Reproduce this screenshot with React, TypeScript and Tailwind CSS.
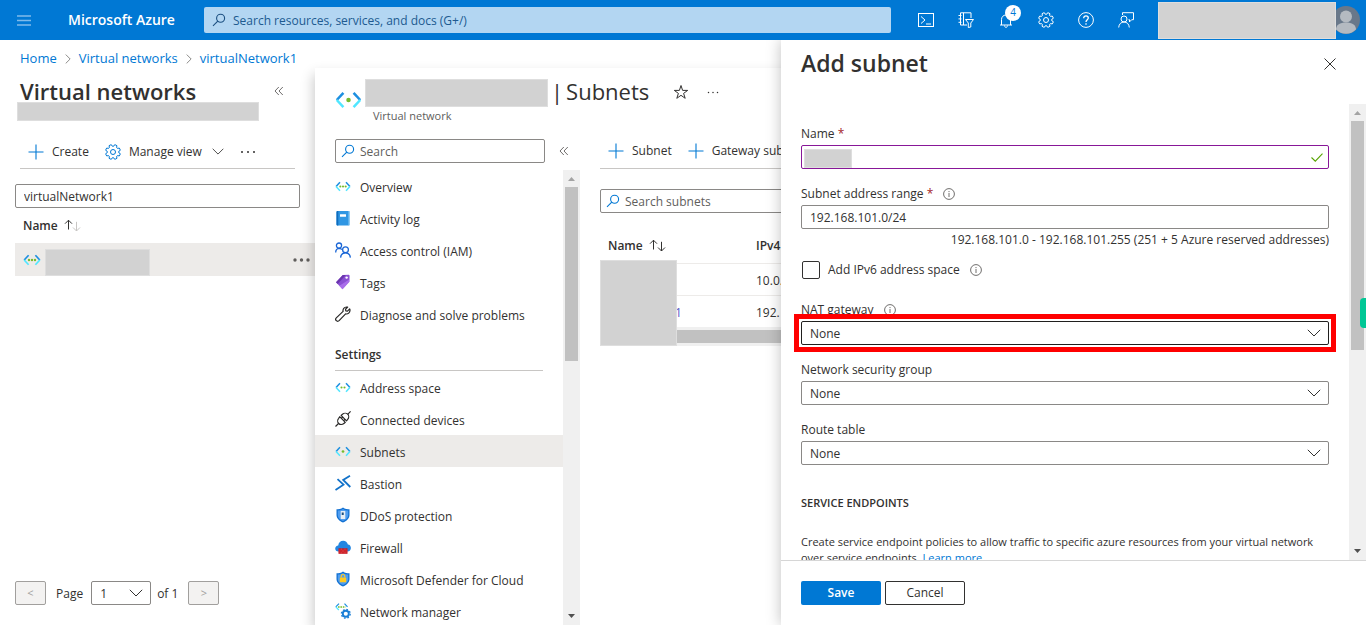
import type { ReactNode } from 'react'

type IconProps = { className?: string }

// eight rounded teeth around a 16x16 box
const GEAR_PATH = (() => {
  const pt = (r: number, deg: number) => {
    const a = (deg * Math.PI) / 180
    return `${(8 + r * Math.cos(a)).toFixed(2)} ${(8 + r * Math.sin(a)).toFixed(2)}`
  }
  let d = ''
  for (let i = 0; i < 8; i++) {
    const c = i * 45 + 22.5
    d += `${i === 0 ? 'M' : 'L'}${pt(5.9, c - 15)}L${pt(7.4, c - 10)}Q${pt(7.8, c)} ${pt(7.4, c + 10)}L${pt(5.9, c + 15)}Q${pt(5.4, c + 22.5)} ${pt(5.9, c + 30)}`
  }
  return d + 'Z'
})()

function Gear({ className }: IconProps) {
  return (
    <svg viewBox="0 0 16 16" className={className} fill="none" stroke="currentColor">
      <path d={GEAR_PATH} />
      <circle cx="8" cy="8" r="2.5" />
    </svg>
  )
}

function Magnifier({ className }: IconProps) {
  return (
    <svg viewBox="0 0 14 14" className={className} fill="none" stroke="currentColor" strokeWidth="1.1">
      <circle cx="8.6" cy="5.2" r="4" />
      <path d="M5.8 8.1L1 12.9" />
    </svg>
  )
}

function Plus() {
  return (
    <svg viewBox="0 0 16 16" className="size-4 text-[#0078d4]" fill="none" stroke="currentColor" strokeWidth="1.1">
      <path d="M8 0.5v15M0.5 8h15" />
    </svg>
  )
}

function Chevron({ className }: IconProps) {
  return (
    <svg viewBox="0 0 14 8" className={className} fill="none" stroke="currentColor">
      <path d="M0.8 0.8L7 7l6.2-6.2" />
    </svg>
  )
}

function Collapse({ className }: IconProps) {
  return (
    <svg viewBox="0 0 10 10" className={className} fill="none" stroke="#605e5c" strokeWidth="0.9">
      <path d="M4.8 1L1 5l3.8 4M8.800 1L5 5l3.800 4" />
    </svg>
  )
}

function Dots({ className }: IconProps) {
  return (
    <svg viewBox="0 0 16 4" className={className} fill="currentColor">
      <circle cx="2" cy="2" r="1" />
      <circle cx="8" cy="2" r="1" />
      <circle cx="14" cy="2" r="1" />
    </svg>
  )
}

function Info() {
  return (
    <svg viewBox="0 0 12 12" className="size-3" fill="none" stroke="#605e5c" strokeWidth="0.9">
      <circle cx="6" cy="6" r="5.4" />
      <path d="M6 5v4M6 3v1.1" />
    </svg>
  )
}

function SortArrows({ faded }: { faded?: boolean }) {
  return (
    <svg viewBox="0 0 17 13" className="h-[13px] w-[17px]" fill="none" stroke="#323130">
      <path d="M4.500 10.500V1.200M1 4.700l3.500-3.500L8 4.700" />
      <path d="M12.500 2.800V12M9 8.500l3.500 3.500L16 8.500" stroke={faded ? '#c8c6c4' : '#323130'} />
    </svg>
  )
}

function VNet({ dots, className }: { dots: number; className?: string }) {
  const xs = dots === 1 ? [9] : dots === 2 ? [7.3, 10.7] : [6, 9, 12]
  return (
    <svg viewBox="0 0 18 12" className={className} fill="none" strokeWidth="1.7">
      <path d="M5.600 1.200L1.200 6" stroke="#1c8fe0" />
      <path d="M1.200 6l4.400 4.800" stroke="#50e6ff" />
      <path d="M12.400 1.200L16.800 6" stroke="#1c8fe0" />
      <path d="M16.800 6l-4.400 4.800" stroke="#50e6ff" />
      {xs.map((x) => (
        <circle key={x} cx={x} cy="6" r={dots === 1 ? 1.5 : 1.2} fill="#76bc2d" />
      ))}
    </svg>
  )
}

function Svg16({ children }: { children: ReactNode }) {
  return (
    <svg viewBox="0 0 16 16" className="size-4" fill="none">
      {children}
    </svg>
  )
}

const SHIELD = 'M8 0.5C10 2 12.3 2.3 14.5 2.3V8c0 3.6-3 6-6.5 7.5C4.5 14 1.5 11.6 1.5 8V2.3C3.7 2.3 6 2 8 0.5Z'
const SHIELD_INNER = 'M8 2c1.6 1.1 3.4 1.5 5.2 1.5V8c0 2.9-2.4 4.9-5.2 6.1C5.2 12.9 2.8 10.9 2.8 8V3.5C4.6 3.5 6.4 3.1 8 2z'

const ICONS = {
  overview: <VNet dots={3} className="h-[11px] w-4" />,
  space: <VNet dots={2} className="h-[11px] w-4" />,
  subnets: <VNet dots={1} className="h-[11px] w-4" />,
  log: (
    <Svg16>
      <rect x="1.5" y="1" width="13" height="14.5" rx="1" fill="#2f96e3" />
      <path d="M1.5 2a1 1 0 011-1H3.300v14.500h-.8a1 1 0 01-1-1z" fill="#0f6cbd" />
      <path d="M13.500 1h.5a.8.8 0 01.8.8v12.900a.8.8 0 01-.8.8h-.5z" fill="#8ccbf5" />
      <rect x="5" y="4.300" width="6" height="2.400" rx=".3" fill="#fff" />
    </Svg16>
  ),
  iam: (
    <Svg16>
      <g stroke="#1a66d6" strokeWidth="1.3">
        <circle cx="4" cy="3.6" r="2.6" />
        <circle cx="10.500" cy="7.800" r="2.900" />
        <path d="M0.700 10.500C.7 8 2 6.500 4 6.300c1.200 0 2 .4 2.900 1.100M5.600 15.600c.2-3 2-4.800 4.900-4.800s4.600 1.800 4.900 4.800" />
      </g>
    </Svg16>
  ),
  tags: (
    <Svg16>
      <path d="M7.800 1l6-.2.8.8-.2 6.200-6.900 7.400-6.500-6.900z" fill="#8a4fd3" />
      <path d="M7.800 1l3-.1L2.700 9.900 1 8.300z" fill="#6a35ad" />
      <path d="M7.500 15.200L4.300 11.800l10-6.300v2.300z" fill="#b77af4" opacity=".7" />
      <circle cx="11.600" cy="3.600" r="1.200" fill="#fff" />
    </Svg16>
  ),
  wrench: (
    <Svg16>
      <path
        d="M11.600 1c-2.400.1-4 2-3.500 4.400L1.300 11.900a1.900 1.900 0 002.800 2.800l6.500-6.800c2.400.5 4.600-1.200 4.400-4l-.3-1-2.200 2.300-1.700-.3-.3-1.700 2.200-2.100z"
        stroke="#292827"
        strokeWidth="1.2"
        strokeLinejoin="round"
      />
    </Svg16>
  ),
  plug: (
    <Svg16>
      <g stroke="#292827" strokeWidth="1.2" strokeLinejoin="round">
        <path d="M0.500 15.500l3-3M12.700 3.300l2.900-2.900" />
        <path d="M4.700 5.700l5.600 5.600-1.400 1.200c-1.500 1.300-4 1.300-5.200 0-1.300-1.300-1.300-3.800 0-5.200z" />
        <path d="M6.100 4.400l1.400-1.200c1.500-1.300 3.900-1.300 5.200 0s1.300 3.700 0 5.200L11.500 9.800z" />
        <path d="M6.300 7.300l1.600-1.300M8.700 9.700l1.500-1.500" />
      </g>
    </Svg16>
  ),
  bastion: (
    <Svg16>
      <g stroke="#1272c9" strokeWidth="1.8">
        <path d="M0.500 15l8-5.300-6-5.500" />
        <path d="M15 .8L8.200 5l7.100 7" />
      </g>
    </Svg16>
  ),
  ddos: (
    <Svg16>
      <path d={SHIELD} fill="#1372d3" />
      <path d={SHIELD_INNER} fill="#4f9df0" />
      <rect x="5.700" y="4" width="4.600" height="8" rx=".5" fill="#e8eef5" />
      <rect x="6.700" y="5.500" width="2" height="2.500" fill="#1b4f80" />
    </Svg16>
  ),
  firewall: (
    <Svg16>
      <path d="M3.500 12.500C1.500 12.500.2 11.200.2 9.500c0-1.800 1.300-2.900 3-3.100C3.500 3.600 5.600 1.700 8.200 1.700c2.300 0 4.100 1.500 4.700 3.700 1.800.1 3 1.600 3 3.500s-1.300 3.600-3.300 3.600z" fill="#2386e2" />
      <rect x="3.500" y="9.300" width="9" height="5.500" fill="#c5161f" />
      <path d="M3.500 11h9M3.500 13h9M6.300 9.300V11M10 9.300V11M8 11v2M6.300 13v1.800M10 13v1.800" stroke="#e8545b" strokeWidth=".5" />
    </Svg16>
  ),
  defender: (
    <Svg16>
      <path d={SHIELD} fill="#1372d3" />
      <path d={SHIELD_INNER} fill="#4f9df0" />
      <rect x="4.800" y="6.500" width="6.400" height="4.800" rx=".5" fill="#ffca1f" />
      <path d="M6.200 6.600V5.300a1.800 1.800 0 013.600 0v1.300" stroke="#ffca1f" strokeWidth="1.2" />
    </Svg16>
  ),
  manager: (
    <Svg16>
      <path d="M4 .6L.8 3.900M9.500.6l3 3.300" stroke="#1c8fe0" strokeWidth="1.2" />
      <path d="M.8 3.900l3 3.100" stroke="#50e6ff" strokeWidth="1.2" />
      <path d="M3 3.900h7.500" stroke="#76bc2d" strokeWidth="1.5" strokeDasharray="1.6 .8" />
      <circle cx="10.800" cy="10.800" r="3" stroke="#1b7fd6" strokeWidth="1.9" />
      <circle cx="10.800" cy="10.800" r="4.400" stroke="#1b7fd6" strokeWidth="1.3" strokeDasharray="1.7 1.75" />
    </Svg16>
  ),
}

const MENU: { label: string; icon: keyof typeof ICONS }[] = [
  { label: 'Overview', icon: 'overview' },
  { label: 'Activity log', icon: 'log' },
  { label: 'Access control (IAM)', icon: 'iam' },
  { label: 'Tags', icon: 'tags' },
  { label: 'Diagnose and solve problems', icon: 'wrench' },
]

const SETTINGS: { label: string; icon: keyof typeof ICONS }[] = [
  { label: 'Address space', icon: 'space' },
  { label: 'Connected devices', icon: 'plug' },
  { label: 'Subnets', icon: 'subnets' },
  { label: 'Bastion', icon: 'bastion' },
  { label: 'DDoS protection', icon: 'ddos' },
  { label: 'Firewall', icon: 'firewall' },
  { label: 'Microsoft Defender for Cloud', icon: 'defender' },
  { label: 'Network manager', icon: 'manager' },
]

const HEADER_ICONS: { label: string; icon: ReactNode; badge?: string }[] = [
  {
    label: 'Cloud Shell',
    icon: (
      <>
        <rect x="0.5" y="1.5" width="15" height="13" />
        <path d="M3 4.500l4 3.500-4 3.500M8 12h5" />
      </>
    ),
  },
  {
    label: 'Directories',
    icon: (
      <>
        <path d="M13 6V.8H2.500V13H9M5.500.8V13M.5 3.500h3M.5 6.900h3M.5 10.300h3" />
        <path d="M7.500 7.500h8l-2.700 3.500v4l-2.500.5V11z" />
      </>
    ),
  },
  {
    label: 'Notifications',
    icon: <path d="M2 13h12M3.500 13V7.500C3.500 5 5.300 3 8 3s4.500 2 4.500 4.500V13M6.500 13.500c.2 1.300.8 1.900 1.500 1.900s1.300-.6 1.500-1.900" />,
    badge: '4',
  },
  {
    label: 'Settings',
    icon: (
      <>
        <path d={GEAR_PATH} />
        <circle cx="8" cy="8" r="2.5" />
      </>
    ),
  },
  {
    label: 'Help',
    icon: (
      <>
        <circle cx="8" cy="8" r="7.4" />
        <path d="M5.700 6.200C5.700 4.700 6.700 3.800 8 3.800s2.300.9 2.300 2.200c0 1.700-2.300 1.900-2.300 4M8 11.200v1.500" strokeWidth="1.3" />
      </>
    ),
  },
  {
    label: 'Feedback',
    icon: (
      <>
        <path d="M4.500 3V.7h11v7h-1.800L11.500 9.900V7.700h-1" />
        <circle cx="6" cy="7" r="3" />
        <path d="M.7 15.500C.9 12.200 3 10 6 10s5.100 2.200 5.300 5.500" />
      </>
    ),
  },
]

function Redacted({ className }: IconProps) {
  return <div className={`border border-[#dedede] bg-[#d2d2d2] ${className}`} />
}

function Scrollbar({ thumb }: { thumb: string }) {
  return (
    <div className="flex w-[17px] shrink-0 flex-col items-center bg-[#f0f0f0]">
      <svg viewBox="0 0 17 17" className="size-[17px] shrink-0">
        <path d="M5 11h7L8.500 7z" fill="#a3a3a3" />
      </svg>
      <div className={`w-[13px] bg-[#c1c1c1] ${thumb}`} />
      <svg viewBox="0 0 17 17" className="mt-auto size-[17px] shrink-0">
        <path d="M5 6h7l-3.500 4z" fill="#505050" />
      </svg>
    </div>
  )
}

function MenuItem({ label, icon }: { label: string; icon: keyof typeof ICONS }) {
  return (
    <a href="#" className={`flex h-8 shrink-0 items-center gap-[9px] pl-5 ${label === 'Subnets' ? 'bg-[#edebe9]' : ''}`}>
      <span className="flex w-4 justify-center">{ICONS[icon]}</span>
      <span className="pt-[3px]">{label}</span>
    </a>
  )
}

function SelectField({ id, label, info, highlight }: { id: string; label: string; info?: boolean; highlight?: boolean }) {
  return (
    <div>
      <div className="flex h-6 items-center gap-2.5 pt-0.5">
        <label htmlFor={id}>{label}</label>
        {info && <Info />}
      </div>
      <div className="relative">
        {highlight && <div className="absolute -inset-[7px] border-[5px] border-[#ff0000] bg-white" />}
        <select
          id={id}
          className={`relative block h-6 w-full appearance-none rounded-xs border bg-white px-2 pt-0.5 ${highlight ? 'border-[#201f1e]' : 'border-[#8a8886]'}`}
        >
          <option>None</option>
        </select>
        <Chevron className="pointer-events-none absolute top-2 right-2 h-2 w-3.5" />
      </div>
    </div>
  )
}

function Header() {
  return (
    <header className="flex h-10 shrink-0 items-center bg-[#0078d4]">
      <button aria-label="Menu" className="flex w-12 justify-center">
        <svg viewBox="0 0 14 11" className="h-[11px] w-3.5" stroke="#80bbea" strokeWidth="1.5">
          <path d="M0 1h14M0 5.500h14M0 10h14" />
        </svg>
      </button>
      <span className="w-[156px] pl-5 text-sm font-semibold text-white">Microsoft Azure</span>
      <label className="flex h-[26px] flex-1 items-center gap-[7px] rounded-xs bg-[#b3d6f2] px-2 text-[#1b4f80]">
        <Magnifier className="size-3.5" />
        <input
          type="search"
          aria-label="Search resources"
          placeholder="Search resources, services, and docs (G+/)"
          className="flex-1 bg-transparent pt-px outline-none placeholder:text-[#205a90]"
        />
      </label>
      <div className="ml-[15px] flex">
        {HEADER_ICONS.map((item) => (
          <button key={item.label} aria-label={item.label} className="relative flex size-10 items-center justify-center">
            <svg viewBox="0 0 16 16" className="size-4" fill="none" stroke="#fff">
              {item.icon}
            </svg>
            {item.badge && (
              <span className="absolute top-[5px] right-[5px] flex size-4 items-center justify-center rounded-full bg-white text-[10px] text-[#0078d4]">
                {item.badge}
              </span>
            )}
          </button>
        ))}
      </div>
      <Redacted className="relative z-10 ml-3 h-[37px] w-[178px]" />
      <svg viewBox="0 0 28 28" className="mr-1.5 -ml-1 size-7">
        <circle cx="14" cy="14" r="14" fill="#69788a" />
        <circle cx="14" cy="10.500" r="6" fill="#b4bac1" />
        <path d="M4 23.500C4 19 8 16.500 14 16.500s10 2.500 10 7a14 14 0 01-20 0z" fill="#b4bac1" />
      </svg>
    </header>
  )
}

function NetworksBlade() {
  return (
    <section className="flex w-[315px] shrink-0 flex-col">
      <div className="flex h-[34px] items-center justify-between pt-3 pr-[31px] pl-5">
        <h1 className="text-[22px] leading-[30px] font-semibold">Virtual networks</h1>
        <button aria-label="Collapse list">
          <Collapse className="size-2.5" />
        </button>
      </div>
      <Redacted className="relative ml-[17px] h-[19px] w-[242px]" />
      <div className="mt-3.5 mr-5 ml-5 flex h-[34px] items-center border-b border-[#c8c6c4] pl-2">
        <button className="flex items-center gap-2">
          <Plus />
          Create
        </button>
        <button className="ml-4 flex items-center gap-2">
          <Gear className="size-4 text-[#0078d4]" />
          Manage view
          <span className="pl-0.5">
            <Chevron className="h-[7px] w-3" />
          </span>
        </button>
        <button aria-label="More commands" className="ml-4">
          <Dots className="h-1 w-4" />
        </button>
      </div>
      <input
        aria-label="Filter by name"
        defaultValue="virtualNetwork1"
        className="mt-[15px] mr-[15px] ml-[15px] h-6 rounded-xs border border-[#8a8886] px-2 outline-none"
      />
      <table className="ml-[15px]">
        <thead>
          <tr className="h-[35px]">
            <th className="pl-2 text-left font-semibold">
              <span className="flex items-center gap-1.5">
                Name <SortArrows faded />
              </span>
            </th>
          </tr>
        </thead>
        <tbody>
          <tr className="h-[33px] bg-[#edebe9]">
            <td className="pl-2">
              <div className="flex items-center">
                <VNet dots={3} className="h-3 w-[18px]" />
                <Redacted className="mt-1.5 ml-1 h-[27px] w-[105px]" />
                <button aria-label="Row actions" className="mr-1 ml-auto">
                  <svg viewBox="0 0 18 4" className="h-1 w-[18px]" fill="#605e5c">
                    <circle cx="2" cy="2" r="1.7" />
                    <circle cx="8.500" cy="2" r="1.7" />
                    <circle cx="15" cy="2" r="1.7" />
                  </svg>
                </button>
              </div>
            </td>
          </tr>
        </tbody>
      </table>
      <div className="mt-auto mb-5 ml-[15px] flex items-center">
        <button className="h-6 w-[31px] rounded-xs border border-[#a19f9d] bg-[#f3f2f1] text-[11px] text-[#a19f9d]">&lt;</button>
        <label htmlFor="page" className="ml-2.5 pt-0.5">
          Page
        </label>
        <div className="relative ml-2">
          <select id="page" className="block h-6 w-[60px] appearance-none rounded-xs border border-[#8a8886] px-2 pt-0.5">
            <option>1</option>
          </select>
          <Chevron className="pointer-events-none absolute top-2 right-2 h-2 w-3.5" />
        </div>
        <span className="ml-1.5 pt-0.5">of 1</span>
        <button className="ml-2.5 h-6 w-[31px] rounded-xs border border-[#a19f9d] bg-[#f3f2f1] text-[11px] text-[#a19f9d]">&gt;</button>
      </div>
    </section>
  )
}

function SubnetTable() {
  return (
    <div className="min-w-0 flex-1 overflow-hidden pl-5">
      <div className="flex h-[35px] items-center gap-4 border-b border-[#c8c6c4] pl-2">
        <button className="flex items-center gap-2">
          <Plus />
          Subnet
        </button>
        <button className="flex items-center gap-2">
          <Plus />
          Gateway subnet
        </button>
      </div>
      <label className="mt-5 flex h-6 items-center gap-[5px] rounded-xs border border-[#8a8886] px-[5px]">
        <Magnifier className="size-3.5 text-[#0078d4]" />
        <input
          type="search"
          aria-label="Search subnets"
          placeholder="Search subnets"
          className="flex-1 pt-0.5 outline-none placeholder:text-[#605e5c]"
        />
      </label>
      <div className="relative mt-3.5">
        <table className="w-full">
          <thead>
            <tr className="h-9 border-b border-[#edebe9] text-left">
              <th className="w-[156px] pt-0.5 pl-2 font-semibold">
                <span className="flex items-center gap-1.5">
                  Name <SortArrows />
                </span>
              </th>
              <th className="pt-0.5 font-semibold">IPv4</th>
            </tr>
          </thead>
          <tbody>
            <tr className="h-8 border-b border-[#edebe9]">
              <td />
              <td className="pt-1">10.0.</td>
            </tr>
            <tr className="h-8">
              <td className="pt-1 pl-[75px] text-[#5a5ac8]">1</td>
              <td className="pt-1">192.</td>
            </tr>
          </tbody>
        </table>
        <div className="bg-[#f0f0f0] py-[3px]">
          <div className="h-[13px] bg-[#c1c1c1]" />
        </div>
        <Redacted className="absolute bottom-0 left-0 h-[86px] w-[77px]" />
      </div>
    </div>
  )
}

function SubnetsBlade() {
  return (
    <section className="flex min-w-0 flex-1 flex-col bg-white shadow-[-2px_6px_12px_rgba(0,0,0,0.2)]">
      <div className="flex h-[66px] pt-2.5 pl-5">
        <VNet dots={1} className="mt-[13px] h-[18px] w-[27px]" />
        <div className="ml-[3px]">
          <div className="flex h-7 items-center">
            <Redacted className="mt-0.5 h-7 w-[183px]" />
            <h2 className="ml-[3px] flex gap-[3px] text-[22px]">
              <span>|</span> Subnets
            </h2>
            <button aria-label="Pin to favorites" className="ml-6">
              <svg viewBox="0 0 16 16" className="size-4" fill="none" stroke="#323130">
                <path d="M8 1.500l1.600 4.900h5.100l-4.100 3 1.600 4.900L8 11.300l-4.200 3 1.600-4.900-4.100-3h5.100z" />
              </svg>
            </button>
            <button aria-label="More" className="ml-4">
              <Dots className="h-[3px] w-4" />
            </button>
          </div>
          <p className="ml-2 text-[11px] leading-5 text-[#605e5c]">Virtual network</p>
        </div>
      </div>
      <div className="flex min-h-0 flex-1">
        <div className="flex w-[265px] shrink-0 flex-col">
          <div className="mt-[5px] flex items-center pr-[11px] pl-5">
            <label className="flex h-6 w-[210px] items-center gap-[5px] rounded-xs border border-[#8a8886] px-[5px]">
              <Magnifier className="size-3.5 shrink-0 text-[#0078d4]" />
              <input
                type="search"
                aria-label="Search menu"
                placeholder="Search"
                className="min-w-0 flex-1 pt-0.5 outline-none placeholder:text-[#605e5c]"
              />
            </label>
            <button aria-label="Collapse menu" className="ml-auto">
              <Collapse className="size-2.5" />
            </button>
          </div>
          <div className="mt-[7px] flex min-h-0 flex-1">
            <nav className="flex min-w-0 flex-1 flex-col overflow-hidden">
              {MENU.map((item) => (
                <MenuItem key={item.label} {...item} />
              ))}
              <h3 className="mr-5 ml-5 flex h-[41px] shrink-0 items-center border-b border-[#c8c6c4] pt-2.5 font-semibold">Settings</h3>
              {SETTINGS.map((item) => (
                <MenuItem key={item.label} {...item} />
              ))}
            </nav>
            <Scrollbar thumb="h-[174px]" />
          </div>
        </div>
        <SubnetTable />
      </div>
    </section>
  )
}

function AddSubnetPanel() {
  return (
    <aside className="absolute inset-y-0 right-0 flex w-[585px] flex-col bg-white shadow-[0_0_14px_rgba(0,0,0,0.25)]">
      <div className="flex h-16 shrink-0 justify-between pt-2 pr-[30px] pl-5">
        <h2 className="text-[23px] leading-[30px] font-semibold">Add subnet</h2>
        <button aria-label="Close" className="flex h-8 items-center">
          <svg viewBox="0 0 12 12" className="size-3" stroke="#323130">
            <path d="M0.500 0.500l11 11M11.500 0.500l-11 11" />
          </svg>
        </button>
      </div>
      <div className="flex min-h-0 flex-1">
        <form className="flex min-w-0 flex-1 flex-col gap-3 overflow-hidden px-5 pt-[17px]">
          <div>
            <label htmlFor="name" className="flex h-6 items-center pt-0.5">
              Name&nbsp;<span className="text-[#a4262c]">*</span>
            </label>
            <div className="relative">
              <input id="name" className="block h-6 w-full rounded-xs border border-[#881798] px-2 outline-none" />
              <Redacted className="absolute top-1 left-[3px] h-[19px] w-12" />
              <svg viewBox="0 0 12 9" className="absolute top-2 right-1.5 h-[9px] w-3" fill="none" stroke="#57a300" strokeWidth="1.1">
                <path d="M0.500 4.500l3.800 3.700L11.500.7" />
              </svg>
            </div>
          </div>
          <div>
            <div className="flex h-6 items-center gap-2.5 pt-0.5">
              <label htmlFor="range">
                Subnet address range <span className="text-[#a4262c]">*</span>
              </label>
              <Info />
            </div>
            <input
              id="range"
              defaultValue="192.168.101.0/24"
              className="block h-6 w-full rounded-xs border border-[#8a8886] px-2 outline-none"
            />
            <p className="mt-px text-right leading-5">192.168.101.0 - 192.168.101.255 (251 + 5 Azure reserved addresses)</p>
            <div className="mt-2.5 flex h-5 items-center">
              <input
                id="ipv6"
                type="checkbox"
                className="ml-px size-[18px] appearance-none rounded-xs border border-[#323130] bg-white"
              />
              <label htmlFor="ipv6" className="ml-2 pr-2.5">
                Add IPv6 address space
              </label>
              <Info />
            </div>
          </div>
          <div className="mt-[5px] flex flex-col gap-3">
            <SelectField id="nat" label="NAT gateway" info highlight />
            <SelectField id="nsg" label="Network security group" />
            <SelectField id="route" label="Route table" />
          </div>
          <h3 className="mt-4 text-[11px] leading-5 font-semibold">SERVICE ENDPOINTS</h3>
          <p className="mt-[9px] text-[11px] leading-4">
            Create service endpoint policies to allow traffic to specific azure resources from your virtual network over service endpoints.{' '}
            <a href="#" className="text-[#0078d4]">
              Learn more
            </a>
          </p>
        </form>
        <Scrollbar thumb="h-[229px]" />
      </div>
      <div className="flex h-[65px] shrink-0 gap-1 border-t border-[#d6d6d6] pt-5 pl-5">
        <button className="h-6 w-20 rounded-xs bg-[#0078d4] font-semibold text-white">Save</button>
        <button className="h-6 w-20 rounded-xs border border-[#323130] font-medium">Cancel</button>
      </div>
      <div className="absolute top-[258px] right-0 h-[30px] w-1.5 rounded-l bg-[#00c795]" />
    </aside>
  )
}

export default function App() {
  return (
    <div className="flex h-screen flex-col overflow-hidden bg-white font-['Open_Sans','Noto_Sans',sans-serif] text-xs text-[#323130]">
      <Header />
      <main className="relative flex min-h-0 flex-1 flex-col overflow-hidden">
        <nav className="flex h-7 shrink-0 items-center gap-1.5 pt-2.5 pl-5 text-[13px] text-[#0078d4]">
          <a href="#">Home</a>
          <Chevron className="h-1.5 w-2.5 -rotate-90 text-[#605e5c]" />
          <a href="#">Virtual networks</a>
          <Chevron className="h-1.5 w-2.5 -rotate-90 text-[#605e5c]" />
          <a href="#">virtualNetwork1</a>
        </nav>
        <div className="flex min-h-0 flex-1">
          <NetworksBlade />
          <SubnetsBlade />
        </div>
        <AddSubnetPanel />
      </main>
    </div>
  )
}
